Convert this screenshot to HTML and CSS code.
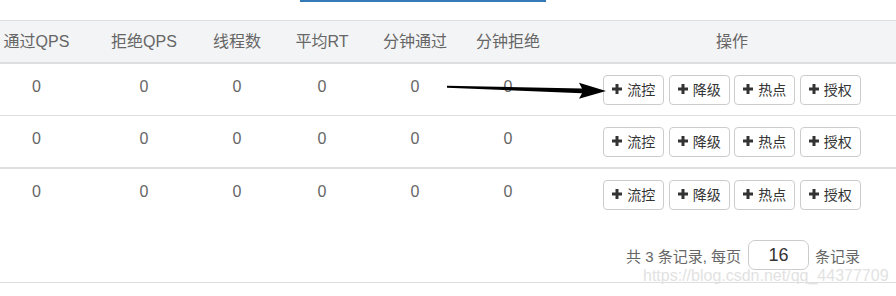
FILE: index.html
```html
<!DOCTYPE html>
<html lang="zh-CN">
<head>
    <meta charset="UTF-8">
    <meta name="viewport" content="width=device-width, initial-scale=1.0">
    <title>流控规则</title>
    <link rel="stylesheet" href="styles.css">
</head>
<body>
    <!-- Top toolbar (only the edge of the active tab is visible) -->
    <div class="toolbar">
        <div class="tab-indicator"></div>
    </div>

    <!-- Metrics table -->
    <div class="table-wrap">
        <table class="metric-table">
            <colgroup>
                <col style="width: 113px">
                <col style="width: 102px">
                <col style="width: 84px">
                <col style="width: 86px">
                <col style="width: 100px">
                <col style="width: 86px">
                <col style="width: 362px">
            </colgroup>
            <thead>
                <tr>
                    <th>通过QPS</th>
                    <th>拒绝QPS</th>
                    <th>线程数</th>
                    <th>平均RT</th>
                    <th>分钟通过</th>
                    <th>分钟拒绝</th>
                    <th>操作</th>
                </tr>
            </thead>
            <tbody>
                <tr>
                    <td>0</td><td>0</td><td>0</td><td>0</td><td>0</td><td>0</td>
                    <td>
                        <div class="actions">
                            <button class="btn"><svg class="icon-plus" viewBox="0 0 10 10"><rect x="0" y="3.5" width="10" height="3"/><rect x="3.5" y="0" width="3" height="10"/></svg>流控</button>
                            <button class="btn"><svg class="icon-plus" viewBox="0 0 10 10"><rect x="0" y="3.5" width="10" height="3"/><rect x="3.5" y="0" width="3" height="10"/></svg>降级</button>
                            <button class="btn"><svg class="icon-plus" viewBox="0 0 10 10"><rect x="0" y="3.5" width="10" height="3"/><rect x="3.5" y="0" width="3" height="10"/></svg>热点</button>
                            <button class="btn"><svg class="icon-plus" viewBox="0 0 10 10"><rect x="0" y="3.5" width="10" height="3"/><rect x="3.5" y="0" width="3" height="10"/></svg>授权</button>
                        </div>
                    </td>
                </tr>
                <tr class="thick-bottom">
                    <td>0</td><td>0</td><td>0</td><td>0</td><td>0</td><td>0</td>
                    <td>
                        <div class="actions">
                            <button class="btn"><svg class="icon-plus" viewBox="0 0 10 10"><rect x="0" y="3.5" width="10" height="3"/><rect x="3.5" y="0" width="3" height="10"/></svg>流控</button>
                            <button class="btn"><svg class="icon-plus" viewBox="0 0 10 10"><rect x="0" y="3.5" width="10" height="3"/><rect x="3.5" y="0" width="3" height="10"/></svg>降级</button>
                            <button class="btn"><svg class="icon-plus" viewBox="0 0 10 10"><rect x="0" y="3.5" width="10" height="3"/><rect x="3.5" y="0" width="3" height="10"/></svg>热点</button>
                            <button class="btn"><svg class="icon-plus" viewBox="0 0 10 10"><rect x="0" y="3.5" width="10" height="3"/><rect x="3.5" y="0" width="3" height="10"/></svg>授权</button>
                        </div>
                    </td>
                </tr>
                <tr class="last-row">
                    <td>0</td><td>0</td><td>0</td><td>0</td><td>0</td><td>0</td>
                    <td>
                        <div class="actions">
                            <button class="btn"><svg class="icon-plus" viewBox="0 0 10 10"><rect x="0" y="3.5" width="10" height="3"/><rect x="3.5" y="0" width="3" height="10"/></svg>流控</button>
                            <button class="btn"><svg class="icon-plus" viewBox="0 0 10 10"><rect x="0" y="3.5" width="10" height="3"/><rect x="3.5" y="0" width="3" height="10"/></svg>降级</button>
                            <button class="btn"><svg class="icon-plus" viewBox="0 0 10 10"><rect x="0" y="3.5" width="10" height="3"/><rect x="3.5" y="0" width="3" height="10"/></svg>热点</button>
                            <button class="btn"><svg class="icon-plus" viewBox="0 0 10 10"><rect x="0" y="3.5" width="10" height="3"/><rect x="3.5" y="0" width="3" height="10"/></svg>授权</button>
                        </div>
                    </td>
                </tr>
            </tbody>
        </table>
    </div>

    <!-- Pagination footer -->
    <div class="table-footer">
        <span class="footer-text">共 3 条记录, 每页</span>
        <input class="page-size" type="text" value="16">
        <span class="footer-text">条记录</span>
    </div>

    <!-- Annotation arrow drawn over the screenshot -->
    <svg class="annotation" viewBox="0 0 896 296">
        <polygon points="447,85.8 582,88.4 579,82.8 606,91 579,98.8 582,93.2 447,87.8" fill="#000"/>
    </svg>

    <div class="watermark">https://blog.csdn.net/qq_44377709</div>
</body>
</html>
```

FILE: styles.css
```css
body {
    font-family: "Liberation Sans", "Noto Sans CJK SC", sans-serif;
    margin: 0;
    padding: 0;
    background-color: #fff;
    color: #666;
    overflow: hidden;
    position: relative;
    height: 296px;
}

.toolbar {
    height: 20px;
}

.tab-indicator {
    margin-left: 300px;
    width: 246px;
    height: 2px;
    background: #337ab7;
}

.table-wrap {
    margin-left: -20px;
    width: 933px;
}

.metric-table {
    width: 933px;
    table-layout: fixed;
    border-collapse: collapse;
}

.metric-table th {
    background: #f3f4f5;
    border-top: 1px solid #dedede;
    border-bottom: 2px solid #dedede;
    padding: 11px 0 10px;
    font-size: 16px;
    line-height: 20px;
    font-weight: normal;
    color: #666;
    text-align: center;
    white-space: nowrap;
}

.metric-table td {
    padding: 11px 0 10px;
    font-size: 16px;
    line-height: 24px;
    color: #666;
    text-align: center;
    vertical-align: top;
    border-bottom: 1px solid #dedede;
}

.metric-table tr.thick-bottom td {
    border-bottom: 2px solid #dedede;
}

.metric-table tr.last-row td {
    border-bottom: none;
}

.actions {
    display: flex;
    justify-content: center;
    gap: 4.5px;
}

.btn {
    font-family: inherit;
    font-size: 14px;
    line-height: 18px;
    height: 30px;
    padding: 5px 8px;
    color: #333;
    background: #fff;
    border: 1px solid #ccc;
    border-radius: 4px;
    display: inline-flex;
    align-items: center;
    cursor: pointer;
}

.icon-plus {
    width: 10px;
    height: 10px;
    fill: #333;
    margin-right: 5px;
    position: relative;
    top: -1px;
}

.table-footer {
    display: flex;
    justify-content: flex-end;
    align-items: center;
    gap: 6px;
    padding: 20px 36px 12px 0;
    border-bottom: 1px solid #dedede;
}

.footer-text {
    font-size: 15px;
    color: #666;
}

.page-size {
    font-family: inherit;
    width: 61px;
    height: 30px;
    box-sizing: border-box;
    border: 1px solid #ccc;
    border-radius: 7px;
    font-size: 18px;
    color: #333;
    text-align: center;
    padding: 0;
    margin-left: 1px;
}

.annotation {
    position: absolute;
    left: 0;
    top: 0;
    width: 896px;
    height: 296px;
    pointer-events: none;
}

.watermark {
    position: absolute;
    left: 643px;
    top: 268px;
    font-size: 16px;
    line-height: 16px;
    color: #e2e2e2;
    white-space: nowrap;
    pointer-events: none;
}
```
